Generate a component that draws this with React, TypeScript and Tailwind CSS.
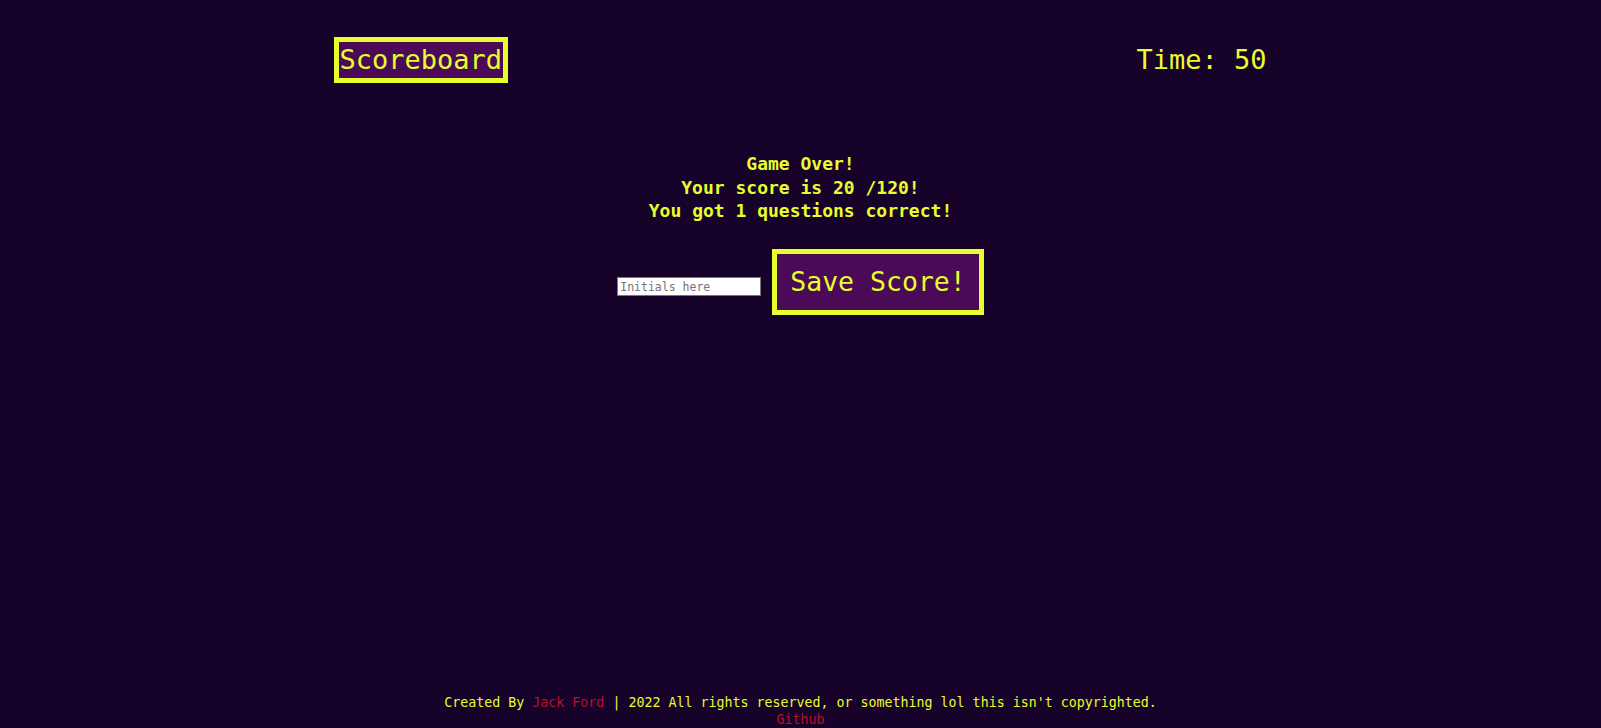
import React from "react";

const mono = "font-['DejaVu_Sans_Mono','Liberation_Mono',monospace]";

export default function App() {
  return (
    <div className={`h-screen flex flex-col bg-[#170229] text-[#e8fd2c] ${mono}`}>
      <header className="w-[934px] mx-auto mt-[37px] flex justify-between items-center">
        <button className="border-[5px] border-[#e8fd2c] bg-[#4a0a57] px-[1px] text-[27px] leading-[36px] text-[#e8fd2c]">
          Scoreboard
        </button>
        <div className="text-[27px] leading-[36px] mr-[1px]">Time: 50</div>
      </header>

      <main className="flex flex-col items-center mt-[69px]">
        <div className="text-center font-bold text-[18px] leading-[23.5px]">
          <p>Game Over!</p>
          <p>Your score is 20 /120!</p>
          <p>You got 1 questions correct!</p>
        </div>
        <div className="flex items-baseline gap-[11px] mt-[26px]">
          <input
            placeholder="Initials here"
            className="w-[144px] h-[19px] bg-white border border-[#767676] px-[2px] text-[11.5px] text-black placeholder:text-[#757575] outline-none"
          />
          <button className="border-[5px] border-[#e8fd2c] bg-[#4a0a57] px-[13px] py-[12px] text-[26.5px] leading-[32px] text-[#e8fd2c]">
            Save Score!
          </button>
        </div>
      </main>

      <footer className="mt-auto text-center text-[13.3px] leading-[17px]">
        <p>
          Created By <a className="text-[#b5122f]">Jack Ford</a> | 2022 All rights reserved, or something lol this isn't copyrighted.
        </p>
        <p>
          <a className="text-[#b5122f]">Github</a>
        </p>
      </footer>
    </div>
  );
}
